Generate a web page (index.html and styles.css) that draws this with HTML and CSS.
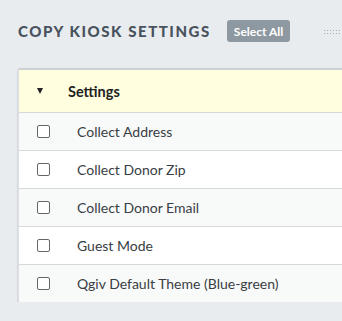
FILE: index.html
```html
<!DOCTYPE html>
<html>
<head>
<meta charset="utf-8">
<link rel="stylesheet" href="styles.css">
</head>
<body>
<div class="page">
  <div class="titlebar">
    <h2 class="title">COPY KIOSK SETTINGS</h2>
    <button class="select-all">Select All</button>
    <span class="dots"></span>
  </div>
  <div class="card">
    <div class="head">
      <span class="caret"></span>
      <span class="head-label">Settings</span>
    </div>
    <div class="row alt"><span class="box"></span><span class="label">Collect Address</span></div>
    <div class="row"><span class="box"></span><span class="label">Collect Donor Zip</span></div>
    <div class="row alt"><span class="box"></span><span class="label">Collect Donor Email</span></div>
    <div class="row"><span class="box"></span><span class="label">Guest Mode</span></div>
    <div class="row alt last"><span class="box"></span><span class="label">Qgiv Default Theme (Blue-green)</span></div>
  </div>
</div>
</body>
</html>
```
FILE: styles.css
```css
html, body {
  margin: 0;
  padding: 0;
  background: #e9ecee;
  overflow: hidden;
}
.page {
  width: 400px;
  padding: 19px 0 0 18px;
  font-family: Lato, "Open Sans", sans-serif;
}
.titlebar {
  display: flex;
  align-items: center;
  height: 24px;
}
.title {
  margin: 0;
  font-size: 15px;
  font-weight: 900;
  letter-spacing: 1.55px;
  color: #48535e;
}
.select-all {
  margin-left: 16px;
  height: 22px;
  padding: 0 7px;
  border: 0;
  border-radius: 3px;
  background: #8e98a0;
  color: #fff;
  font-family: Lato, sans-serif;
  font-size: 12px;
  font-weight: 700;
}
.dots {
  margin-left: 33px;
  width: 24px;
  height: 5px;
  background-image: radial-gradient(circle, #a6adb3 0.7px, transparent 1px);
  background-size: 3px 3px;
}
.card {
  margin-top: 25px;
  background: #fff;
  border-top: 2px solid #cdd1d4;
  border-left: 1px solid #dde0e2;
  border-radius: 2px;
  box-shadow: 0 1px 2px rgba(0,0,0,0.25);
}
.head {
  display: flex;
  align-items: center;
  height: 42px;
  background: #ffffdf;
  border-bottom: 1px solid #d5d9dc;
}
.caret {
  margin-left: 18px;
  width: 0;
  height: 0;
  border-left: 3px solid transparent;
  border-right: 3px solid transparent;
  border-top: 6px solid #222;
}
.head-label {
  margin-left: 25px;
  font-size: 14.5px;
  font-weight: 700;
  color: #222;
}
.row {
  display: flex;
  align-items: center;
  height: 37px;
  background: #fff;
  border-bottom: 1px solid #d5d9dc;
}
.row.alt {
  background: #f8f9f9;
}
.row.last {
  border-bottom: 0;
}
.box {
  margin-left: 18px;
  width: 11px;
  height: 11px;
  border: 1px solid #666;
  border-radius: 2px;
  background: #fff;
}
.label {
  margin-left: 27px;
  font-size: 14px;
  color: #383e44;
}
```
